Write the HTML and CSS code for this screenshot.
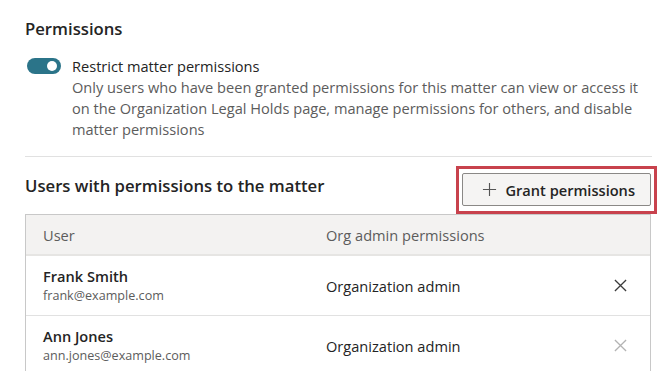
FILE: index.html
```html
<!DOCTYPE html>
<html lang="en">
<head>
    <meta charset="UTF-8">
    <title>Permissions</title>
    <link rel="stylesheet" href="styles.css">
</head>
<body>
    <div class="panel">
        <h2 class="section-title">Permissions</h2>

        <div class="toggle-row">
            <span class="toggle is-on" role="switch" aria-checked="true"><span class="toggle-knob"></span></span>
            <div class="toggle-text">
                <div class="toggle-label">Restrict matter permissions</div>
                <div class="toggle-help">Only users who have been granted permissions for this matter can view or access it on the Organization Legal Holds page, manage permissions for others, and disable matter permissions</div>
            </div>
        </div>

        <hr class="divider">

        <div class="users-head">
            <h2 class="section-title">Users with permissions to the matter</h2>
            <div class="highlight">
                <button class="btn-default">
                    <svg viewBox="0 0 16 16" fill="none" stroke="currentColor" stroke-width="1.2"><path d="M8 1v14M1 8h14"/></svg>
                    Grant permissions
                </button>
            </div>
        </div>

        <div class="users-table">
            <div class="t-row t-head">
                <div class="c-user">User</div>
                <div class="c-perm">Org admin permissions</div>
                <div class="c-act"></div>
            </div>
            <div class="t-row">
                <div class="c-user">
                    <div class="u-name">Frank Smith</div>
                    <div class="u-mail">frank@example.com</div>
                </div>
                <div class="c-perm">Organization admin</div>
                <div class="c-act">
                    <svg class="x-icon" viewBox="0 0 14 14" stroke="currentColor" stroke-width="1.4"><path d="M1 1l12 12M13 1L1 13"/></svg>
                </div>
            </div>
            <div class="t-row">
                <div class="c-user">
                    <div class="u-name">Ann Jones</div>
                    <div class="u-mail">ann.jones@example.com</div>
                </div>
                <div class="c-perm">Organization admin</div>
                <div class="c-act">
                    <svg class="x-icon is-disabled" viewBox="0 0 14 14" stroke="currentColor" stroke-width="1.4"><path d="M1 1l12 12M13 1L1 13"/></svg>
                </div>
            </div>
        </div>
    </div>
</body>
</html>
```

FILE: styles.css
```css
:root {
    --text-primary: #242424;
    --text-secondary: #5c5c5c;
    --border-soft: #e1e1e1;
    --border-table: #c8c8c8;
    --teal: #2b7489;
    --font-body: 'Open Sans', 'Noto Sans', sans-serif;
}
* { margin: 0; padding: 0; box-sizing: border-box; }
body { font-family: var(--font-body); background: #fff; color: var(--text-primary); overflow: hidden; }

.panel { width: 663px; padding: 18px 11px 0 25px; }

.section-title { font-size: 16.7px; font-weight: 600; line-height: 22px; color: var(--text-primary); }

/* Toggle block */
.toggle-row { display: flex; gap: 11px; margin-top: 16px; }
.toggle {
    flex: none; width: 34px; height: 16px; margin: 2px 0 0 2px; border-radius: 8px;
    background: var(--teal); display: flex; align-items: center; justify-content: flex-end; padding-right: 4px;
}
.toggle-knob { width: 10px; height: 10px; border-radius: 50%; background: #fff; }
.toggle-text { font-size: 14.6px; line-height: 21px; }
.toggle-label { color: var(--text-primary); }
.toggle-help { color: var(--text-secondary); padding-right: 6px; }

.divider { border: none; border-top: 1px solid var(--border-soft); margin: 16px 0 0; }

/* Users header */
.users-head { display: flex; justify-content: space-between; align-items: flex-start; margin-top: 9px; }
.users-head .section-title { margin-top: 9px; }
.highlight { border: 3px solid #c8424d; padding: 4px 3px 5px 3px; margin-right: -5px; }
.btn-default {
    display: flex; align-items: center; gap: 8px; height: 33px; padding: 0 15px 0 19px;
    font-family: var(--font-body); font-size: 14.6px; font-weight: 600; color: var(--text-primary);
    background: #f5f4f3; border: 1px solid #8a8886; border-radius: 2px; cursor: pointer;
}
.btn-default svg { width: 15px; height: 15px; color: #555; }

/* Table */
.users-table { border: 1px solid var(--border-table); border-bottom: none; margin-right: 1px; }
.t-row { display: grid; grid-template-columns: 283px 1fr 60px; align-items: center; border-top: 1px solid var(--border-soft); min-height: 60px; }
.c-user, .c-perm { padding-left: 17px; }
.t-head { background: #f3f2f1; min-height: 41px; border-top: none; border-bottom: 2px solid #e6e5e3; font-size: 14.6px; color: var(--text-secondary); }
.t-head + .t-row { border-top: none; min-height: 59px; }
.c-perm { font-size: 14.6px; }
.t-head .c-perm { color: var(--text-secondary); }
.u-name { font-size: 14.6px; font-weight: 600; line-height: 20px; }
.u-mail { font-size: 12.6px; line-height: 20px; color: var(--text-secondary); }
.c-act { display: flex; justify-content: center; }
.x-icon { width: 13px; height: 13px; color: #3b3b3b; }
.x-icon.is-disabled { color: #b3b3b3; }
```
